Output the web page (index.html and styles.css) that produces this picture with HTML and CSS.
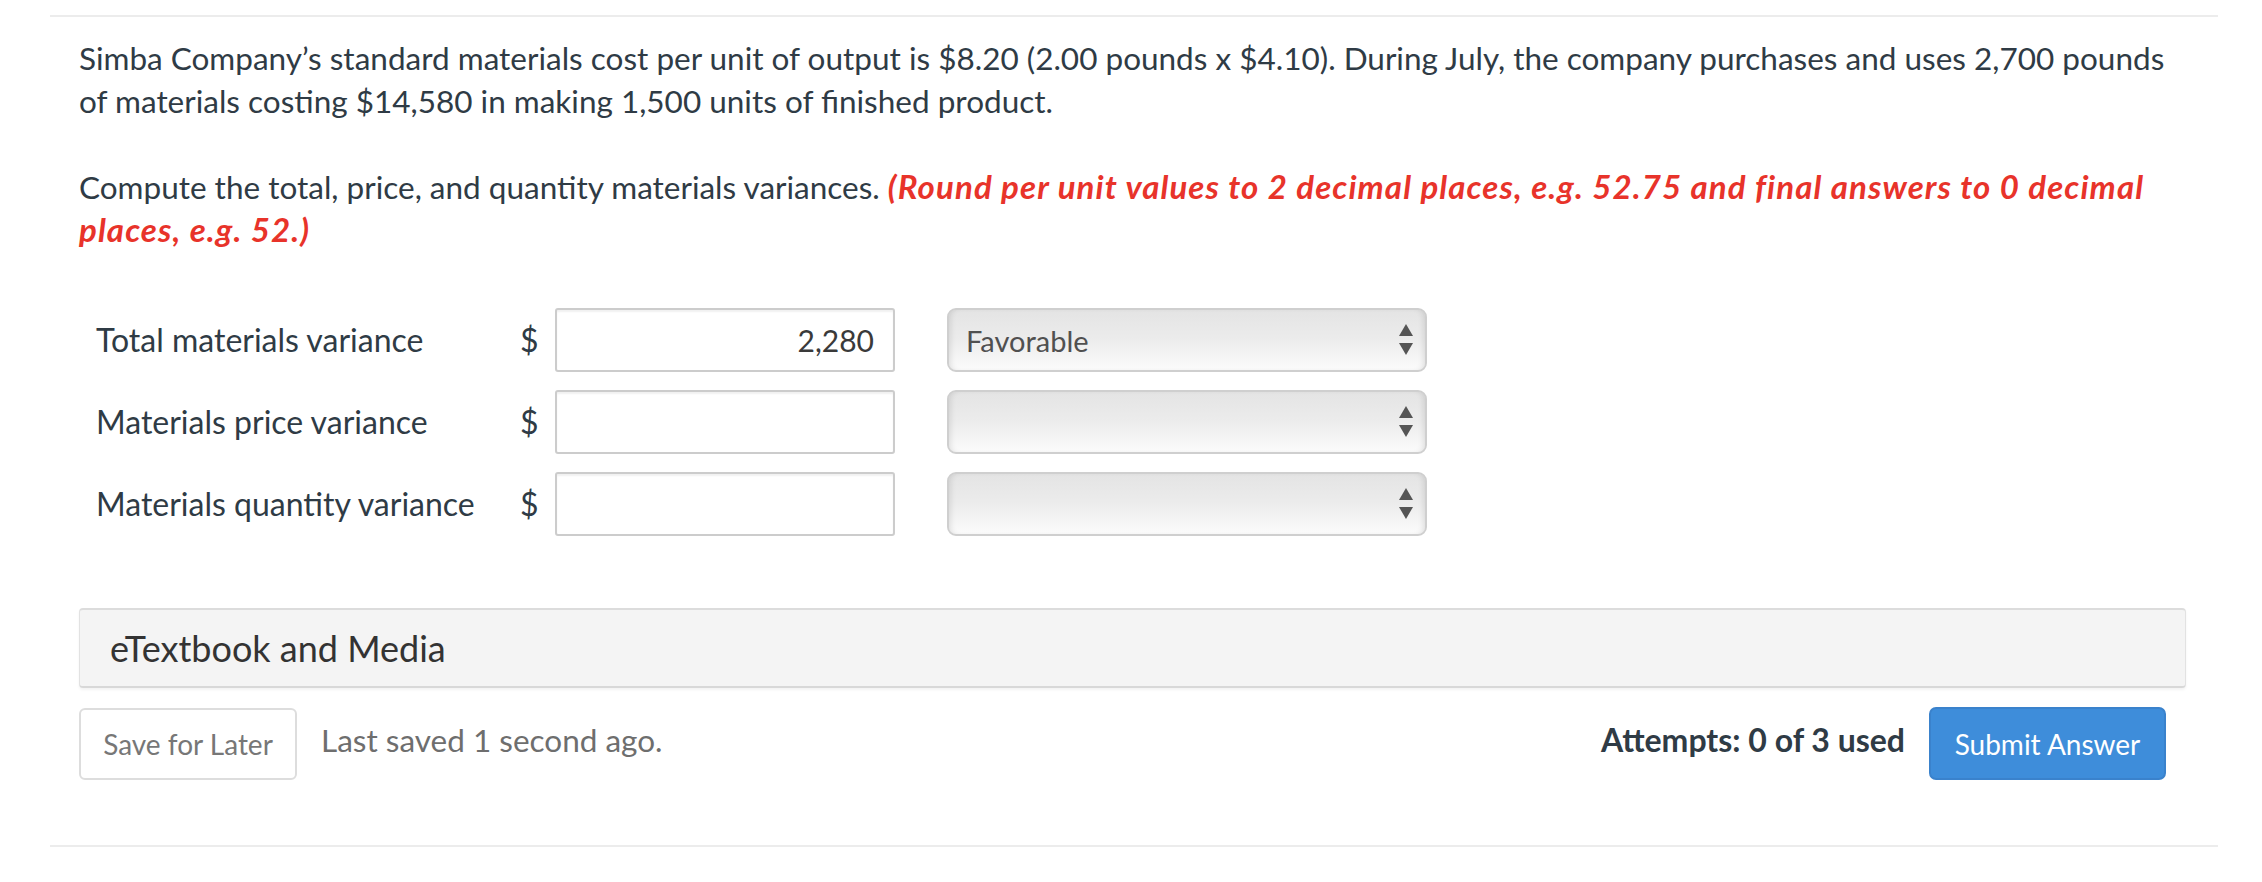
FILE: index.html
```html
<!DOCTYPE html>
<html lang="en">
<head>
<meta charset="utf-8">
<title>Question</title>
<link rel="stylesheet" href="styles.css">
</head>
<body>
<div class="question">
  <div class="content">
    <p class="stem">Simba Company’s standard materials cost per unit of output is $8.20 (2.00 pounds x $4.10). During July, the company purchases and uses 2,700 pounds of materials costing $14,580 in making 1,500 units of finished product.</p>
    <p class="stem">Compute the total, price, and quantity materials variances. <span class="hint">(Round per unit values to 2 decimal places, e.g. 52.75 and final answers to 0 decimal places, e.g. 52.)</span></p>

    <div class="rows">
      <div class="row">
        <div class="label">Total materials variance</div>
        <div class="dollar">$</div>
        <div class="input">2,280</div>
        <div class="select">
          <span class="select-text">Favorable</span>
          <svg class="arrows" width="16" height="34" viewBox="0 0 16 34"><polygon points="8,1 15,13 1,13" fill="#555"/><polygon points="1,20 15,20 8,32" fill="#555"/></svg>
        </div>
      </div>
      <div class="row">
        <div class="label">Materials price variance</div>
        <div class="dollar">$</div>
        <div class="input"></div>
        <div class="select">
          <span class="select-text"></span>
          <svg class="arrows" width="16" height="34" viewBox="0 0 16 34"><polygon points="8,1 15,13 1,13" fill="#555"/><polygon points="1,20 15,20 8,32" fill="#555"/></svg>
        </div>
      </div>
      <div class="row">
        <div class="label">Materials quantity variance</div>
        <div class="dollar">$</div>
        <div class="input"></div>
        <div class="select">
          <span class="select-text"></span>
          <svg class="arrows" width="16" height="34" viewBox="0 0 16 34"><polygon points="8,1 15,13 1,13" fill="#555"/><polygon points="1,20 15,20 8,32" fill="#555"/></svg>
        </div>
      </div>
    </div>

    <div class="panel">eTextbook and Media</div>

    <div class="footer">
      <div class="footer-left">
        <button class="btn-save">Save for Later</button>
        <span class="saved">Last saved 1 second ago.</span>
      </div>
      <div class="footer-right">
        <span class="attempts">Attempts: 0 of 3 used</span>
        <button class="btn-submit">Submit Answer</button>
      </div>
    </div>
  </div>
</div>
</body>
</html>
```

FILE: styles.css
```css
html, body {
  margin: 0;
  padding: 0;
  background: #ffffff;
}

body {
  font-family: Lato, "Open Sans", "Liberation Sans", sans-serif;
  color: #2f3b45;
}

.question {
  margin: 15px 44px 0 50px;
  border-top: 2px solid #ececec;
  border-bottom: 2px solid #ececec;
}

.content {
  padding: 20px 32px 65px 29px;
}

.stem {
  margin: 0 0 43px 0;
  font-size: 31.5px;
  line-height: 43px;
}

.stem:last-of-type {
  margin-bottom: 56px;
}

.hint {
  color: #e8332a;
  font-weight: bold;
  font-style: italic;
  font-size: 33px;
  letter-spacing: 1.1px;
  line-height: 30px;
}

.rows {
  display: flex;
  flex-direction: column;
  gap: 18px;
  padding-left: 17px;
}

.row {
  display: flex;
  align-items: center;
  height: 64px;
}

.label {
  width: 424px;
  font-size: 32px;
  line-height: 40px;
  white-space: nowrap;
}

.dollar {
  width: 35px;
  font-size: 32px;
  line-height: 40px;
}

.input {
  box-sizing: border-box;
  width: 340px;
  height: 64px;
  border: 2px solid #cccccc;
  border-radius: 3px;
  box-shadow: inset 0 2px 2px rgba(0, 0, 0, 0.06);
  font-size: 30px;
  color: #3a3a3a;
  text-align: right;
  padding-right: 19px;
  display: flex;
  align-items: center;
  justify-content: flex-end;
}

.select {
  box-sizing: border-box;
  margin-left: 52px;
  width: 480px;
  height: 64px;
  border: 2px solid #cfcfcf;
  border-radius: 9px;
  background: linear-gradient(to bottom, #e4e4e4 0%, #ececec 50%, #fbfbfb 100%);
  box-shadow: inset 5px 0 6px -4px rgba(0, 0, 0, 0.12), inset -5px 0 6px -4px rgba(0, 0, 0, 0.12);
  display: flex;
  align-items: center;
  justify-content: space-between;
  padding: 0 11px 0 17px;
}

.select-text {
  font-size: 29px;
  color: #505050;
}

.arrows {
  display: block;
}

.panel {
  box-sizing: border-box;
  margin-top: 72px;
  height: 80px;
  background: #f4f4f4;
  border: 1px solid #e2e2e2;
  border-top: 2px solid #dcdcdc;
  border-bottom: 2px solid #d8d8d8;
  border-radius: 4px;
  box-shadow: 0 2px 3px rgba(0, 0, 0, 0.05);
  font-size: 36px;
  color: #333333;
  display: flex;
  align-items: center;
  padding-left: 30px;
}

.footer {
  margin-top: 19px;
  display: flex;
  justify-content: space-between;
  align-items: center;
  padding-right: 20px;
}

.footer-left,
.footer-right {
  display: flex;
  align-items: center;
}

.btn-save {
  box-sizing: border-box;
  width: 218px;
  height: 72px;
  background: #ffffff;
  border: 2px solid #dddddd;
  border-radius: 6px;
  font-family: Lato, "Open Sans", "Liberation Sans", sans-serif;
  font-size: 28px;
  color: #777777;
  padding: 0;
}

.saved {
  margin-left: 24px;
  margin-top: -8px;
  font-size: 31.5px;
  color: #6e6e6e;
}

.attempts {
  font-size: 32px;
  font-weight: bold;
  color: #2f3b45;
  margin-top: -8px;
}

.btn-submit {
  box-sizing: border-box;
  margin-left: 24px;
  width: 237px;
  height: 73px;
  background: #3e8dda;
  border: 2px solid #3a82cc;
  border-radius: 7px;
  font-family: Lato, "Open Sans", "Liberation Sans", sans-serif;
  font-size: 28px;
  color: #ffffff;
  padding: 0;
}
```
